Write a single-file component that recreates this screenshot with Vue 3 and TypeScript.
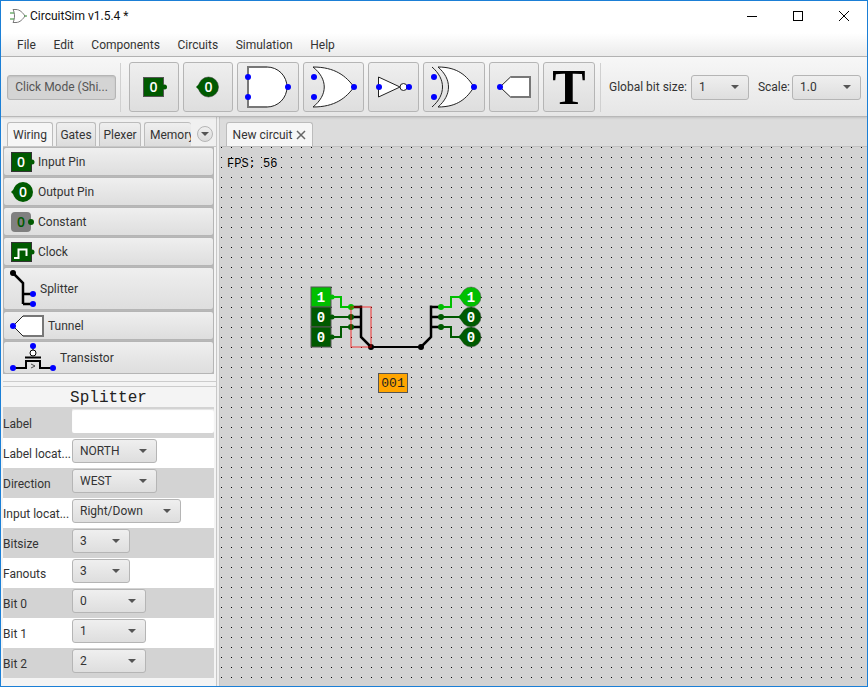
<script setup lang="ts">
const menus: string[] = ['File', 'Edit', 'Components', 'Circuits', 'Simulation', 'Help']
const tabs = [
  { name: 'Wiring', cls: 'tab-wiring' },
  { name: 'Gates', cls: 'tab-gates' },
  { name: 'Plexer', cls: 'tab-plexer' },
  { name: 'Memory', cls: 'tab-memory' },
]
const props = [
  { label: 'Label locat...', value: 'NORTH', w: 85 },
  { label: 'Direction', value: 'WEST', w: 85 },
  { label: 'Input locat...', value: 'Right/Down', w: 109 },
  { label: 'Bitsize', value: '3', w: 58 },
  { label: 'Fanouts', value: '3', w: 58 },
  { label: 'Bit 0', value: '0', w: 74 },
  { label: 'Bit 1', value: '1', w: 74 },
  { label: 'Bit 2', value: '2', w: 74 },
]
const inputs = [
  { y: 296, v: '1', fill: '#00bf00' },
  { y: 316, v: '0', fill: '#005a00' },
  { y: 336, v: '0', fill: '#005a00' },
]
const wires = [
  { d: 'M331 296H341V306H351', c: '#00bf00' },
  { d: 'M331 316H351', c: '#005a00' },
  { d: 'M331 336H341V326H351', c: '#005a00' },
  { d: 'M441 306H451V296H461', c: '#00bf00' },
  { d: 'M441 316H461', c: '#005a00' },
  { d: 'M441 326H451V336H461', c: '#005a00' },
]
</script>

<template>
  <div class="window">
    <header class="titlebar">
      <svg class="app-icon" width="18" height="16" viewBox="0 0 18 16">
        <path d="M4 1.500H7C11 1.500 14 5 16 8C14 11 11 14.500 7 14.500H4C6 11 6 5 4 1.500Z" fill="#fff" stroke="#777" />
        <path d="M1 5H5M1 11H5" stroke="#2a8a2a" />
        <path d="M15.500 8H18" stroke="#2a8a2a" />
      </svg>
      <span class="title-text">CircuitSim v1.5.4 *</span>
      <div class="win-controls">
        <svg width="12" height="12" viewBox="0 0 12 12"><path d="M1 6.500H11" stroke="#000" /></svg>
        <svg width="12" height="12" viewBox="0 0 12 12"><rect x="1.500" y="1.500" width="9" height="9" fill="none" stroke="#000" /></svg>
        <svg width="12" height="12" viewBox="0 0 12 12"><path d="M1 1L11 11M11 1L1 11" stroke="#000" /></svg>
      </div>
    </header>

    <nav class="menubar">
      <span v-for="m in menus" :key="m" class="menu-item">{{ m }}</span>
    </nav>

    <div class="toolbar">
      <button class="fx-btn click-mode">Click Mode (Shi...</button>
      <span class="tool-sep first-sep"></span>

      <button class="fx-btn tool w49">
        <svg width="50" height="50" viewBox="130 61 50 50">
          <rect x="144.500" y="76.500" width="20" height="19" fill="#005a00" stroke="#555" />
          <circle cx="165.500" cy="86" r="2.500" fill="#005a00" />
          <text x="154.500" y="91" class="pin-text small">0</text>
        </svg>
      </button>
      <button class="fx-btn tool w49">
        <svg width="50" height="50" viewBox="184 61 50 50">
          <circle cx="209.500" cy="86" r="10" fill="#005a00" stroke="#333" stroke-width=".5" />
          <path d="M197 86L203 80V92Z" fill="#005a00" />
          <text x="209.500" y="91" class="pin-text small">0</text>
        </svg>
      </button>
      <button class="fx-btn tool w61">
        <svg width="62" height="50" viewBox="238 61 62 50">
          <path d="M268 66H249V106H268" fill="#fff" stroke="#777" stroke-width="2" />
          <path d="M268 66A20 20 0 0 1 268 106" fill="#fff" stroke="#222" />
          <rect x="250" y="67" width="18" height="38" fill="#fff" />
          <circle cx="249" cy="76" r="3" fill="#0000ff" />
          <circle cx="249" cy="96" r="3" fill="#0000ff" />
          <circle cx="289" cy="86" r="3" fill="#0000ff" />
        </svg>
      </button>
      <button class="fx-btn tool w60">
        <svg width="61" height="50" viewBox="303 61 61 50">
          <path d="M313 66C335 66 346 75 354 86C346 97 335 106 313 106C328 94 328 78 313 66Z" fill="#fff" stroke="#222" />
          <circle cx="314" cy="76" r="3" fill="#0000ff" />
          <circle cx="314" cy="96" r="3" fill="#0000ff" />
          <circle cx="354" cy="86" r="3" fill="#0000ff" />
        </svg>
      </button>
      <button class="fx-btn tool w50">
        <svg width="51" height="50" viewBox="368 61 51 50">
          <path d="M378.500 76L400 86L378.500 96Z" fill="#fff" stroke="#222" />
          <circle cx="403.500" cy="86" r="3.500" fill="#fff" stroke="#222" />
          <circle cx="379" cy="86" r="3" fill="#0000ff" />
          <circle cx="409" cy="86" r="3" fill="#0000ff" />
        </svg>
      </button>
      <button class="fx-btn tool w61">
        <svg width="62" height="50" viewBox="423 61 62 50">
          <path d="M438 66C458 66 467 75 474 86C467 97 458 106 438 106C452 94 452 78 438 66Z" fill="#fff" stroke="#222" />
          <path d="M432 66C446 78 446 94 432 106" fill="none" stroke="#222" />
          <circle cx="434" cy="76" r="3" fill="#0000ff" />
          <circle cx="434" cy="96" r="3" fill="#0000ff" />
          <circle cx="474" cy="86" r="3" fill="#0000ff" />
        </svg>
      </button>
      <button class="fx-btn tool w49">
        <svg width="50" height="50" viewBox="489 61 50 50">
          <path d="M500 86L510.500 76H530V96H510.500Z" fill="#fff" />
          <path d="M510.500 76H530V96H510.500" fill="none" stroke="#777" stroke-width="2" />
          <path d="M500 86L510.500 76M500 86L510.500 96" fill="none" stroke="#222" />
          <circle cx="500" cy="86" r="3" fill="#0000ff" />
        </svg>
      </button>
      <button class="fx-btn tool w52 t-btn">T</button>
      <span class="tool-sep last-sep"></span>
      <span class="tool-label first-label">Global bit size:</span>
      <span class="fx-combo tool-combo w58"><span>1</span><i class="caret"></i></span>
      <span class="tool-label scale-label">Scale:</span>
      <span class="fx-combo tool-combo w68"><span>1.0</span><i class="caret"></i></span>
    </div>

    <main class="main">
      <aside class="left">
        <div class="tabstrip">
          <div v-for="(t, i) in tabs" :key="t.name" class="tab" :class="[t.cls, { active: i === 0 }]">{{ t.name }}</div>
          <span class="tab-menu"><i class="caret"></i></span>
        </div>

        <div class="palette">
          <button class="fx-btn pal h30">
            <svg class="pal-icon" width="28" height="22" viewBox="10 150 28 22">
              <rect x="11.500" y="151.500" width="20" height="19" fill="#005a00" stroke="#333" />
              <circle cx="32" cy="161" r="2.500" fill="#005a00" />
              <text x="21" y="166" class="pin-text small">0</text>
            </svg>
            Input Pin
          </button>
          <button class="fx-btn pal h30">
            <svg class="pal-icon" width="28" height="22" viewBox="10 180 28 22">
              <circle cx="23" cy="191" r="10" fill="#005a00" />
              <path d="M11 191L17 185V197Z" fill="#005a00" />
              <text x="23" y="196" class="pin-text small">0</text>
            </svg>
            Output Pin
          </button>
          <button class="fx-btn pal h30">
            <svg class="pal-icon" width="28" height="22" viewBox="10 210 28 22">
              <rect x="11" y="211" width="20" height="20" rx="4" fill="#808080" />
              <circle cx="31" cy="221" r="3" fill="#005a00" />
              <text x="21" y="226" class="pin-text small dark">0</text>
            </svg>
            Constant
          </button>
          <button class="fx-btn pal h30">
            <svg class="pal-icon" width="28" height="22" viewBox="10 240 28 22">
              <rect x="11.500" y="241.500" width="20" height="19" fill="#005a00" stroke="#333" />
              <circle cx="32" cy="251" r="2.500" fill="#005a00" />
              <path d="M14 257H18.500V248.500H26.500V255" fill="none" stroke="#fff" stroke-width="2" />
            </svg>
            Clock
          </button>
          <button class="fx-btn pal h44">
            <svg class="pal-icon" width="30" height="40" viewBox="10 268 30 40">
              <path d="M13 272L23 282V303M23 293H33M23 303H33" fill="none" stroke="#000" stroke-width="2.500" />
              <circle cx="13" cy="272" r="3" fill="#000" />
              <circle cx="33" cy="293" r="3" fill="#0000ff" />
              <circle cx="33" cy="303" r="3" fill="#0000ff" />
            </svg>
            Splitter
          </button>
          <button class="fx-btn pal h30">
            <svg class="pal-icon" width="38" height="24" viewBox="10 313 38 24">
              <path d="M13 325L23 315H43V335H23Z" fill="#fff" />
              <path d="M23 315H43V335H23" fill="none" stroke="#777" stroke-width="2" />
              <path d="M13 325L23 315M13 325L23 335" fill="none" stroke="#222" />
              <circle cx="13" cy="325" r="3" fill="#0000ff" />
            </svg>
            Tunnel
          </button>
          <button class="fx-btn pal h34">
            <svg class="pal-icon" width="50" height="30" viewBox="10 342 50 30">
              <path d="M33 345V349" stroke="#000" />
              <circle cx="33" cy="352" r="3" fill="#fff" stroke="#000" />
              <path d="M25 356.500H41" stroke="#000" stroke-width="2" />
              <path d="M13 367H26V360H40V367H53" fill="none" stroke="#000" stroke-width="2" />
              <path d="M31 363L35 365L31 367" fill="none" stroke="#222" stroke-width=".8" />
              <circle cx="33" cy="345" r="3" fill="#0000ff" />
              <circle cx="13" cy="367" r="3" fill="#0000ff" />
              <circle cx="53" cy="367" r="3" fill="#0000ff" />
            </svg>
            Transistor
          </button>
        </div>

        <div class="h-split"></div>

        <section class="props">
          <h2 class="props-title">Splitter</h2>
          <div class="row gray first-row">
            <span class="row-label">Label</span>
            <span class="text-input"></span>
          </div>
          <div v-for="(p, i) in props" :key="p.label" class="row" :class="i % 2 === 0 ? 'white' : 'gray'">
            <span class="row-label">{{ p.label }}</span>
            <span class="fx-combo prop-combo" :style="{ width: p.w + 'px' }"><span>{{ p.value }}</span><i class="caret"></i></span>
          </div>
        </section>
      </aside>

      <div class="v-split"></div>

      <section class="right">
        <div class="tabstrip right-strip">
          <div class="tab active circuit-tab">New circuit
            <svg class="tab-close" width="10" height="10" viewBox="0 0 10 10"><path d="M1 1L9 9M9 1L1 9" stroke="#666" stroke-width="1.500" /></svg>
          </div>
        </div>
        <div class="canvas">
          <svg class="board" viewBox="220 146 647 540" width="647" height="540">
            <defs>
              <pattern id="grid" x="221" y="146" width="10" height="10" patternUnits="userSpaceOnUse">
                <rect width="1" height="1" fill="#000" />
              </pattern>
            </defs>
            <rect x="220" y="146" width="647" height="540" fill="#d3d3d3" />
            <rect x="220" y="146" width="647" height="540" fill="url(#grid)" />

            <text x="227" y="166" class="fps">FPS: 56</text>

            <g v-for="p in inputs" :key="'in' + p.y">
              <rect x="311" :y="p.y - 10" width="20" height="20" :fill="p.fill" stroke="#555" stroke-width="1" />
              <circle cx="332" :cy="p.y" r="2.500" :fill="p.fill" />
              <text x="321" :y="p.y + 5" class="pin-text">{{ p.v }}</text>
            </g>

            <path v-for="w in wires" :key="w.d" :d="w.d" fill="none" :stroke="w.c" stroke-width="2" />

            <path d="M351 306H361M351 316H361M351 326H361M361 304.500V336L371 346M421 346L431 336V304.500M431 306H441M431 316H441M431 326H441" fill="none" stroke="#000" stroke-width="2.500" />
            <path d="M371 346H421" fill="none" stroke="#000" stroke-width="2" />
            <circle cx="371" cy="346" r="3" fill="#000" />
            <circle cx="421" cy="346" r="3" fill="#000" />

            <circle cx="351" cy="306" r="3" fill="#00bf00" />
            <circle cx="351" cy="316" r="3" fill="#005a00" />
            <circle cx="351" cy="326" r="3" fill="#005a00" />
            <circle cx="441" cy="306" r="3" fill="#00bf00" />
            <circle cx="441" cy="316" r="3" fill="#005a00" />
            <circle cx="441" cy="326" r="3" fill="#005a00" />

            <rect x="351" y="306" width="20" height="40" fill="none" stroke="#ff0000" stroke-opacity=".5" stroke-width="1.500" />

            <g v-for="p in inputs" :key="'out' + p.y">
              <circle cx="471" :cy="p.y" r="10" :fill="p.fill" stroke="#555" stroke-width=".5" />
              <path :d="`M458 ${p.y}L464 ${p.y - 6}V${p.y + 6}Z`" :fill="p.fill" />
              <text x="471" :y="p.y + 5" class="pin-text">{{ p.v }}</text>
            </g>

            <rect x="378.500" y="372.500" width="29" height="19" fill="#ffa500" stroke="#555" />
            <text x="393" y="386" class="value-text">001</text>
          </svg>
        </div>
      </section>
    </main>
  </div>
</template>

<style>
html, body { margin: 0; padding: 0; background: #fff; }
</style>

<style scoped>
.window {
  width: 868px;
  height: 687px;
  box-sizing: border-box;
  border: 1px solid #1b7fd6;
  display: flex;
  flex-direction: column;
  font-family: Roboto, "Open Sans", sans-serif;
  font-size: 12px;
  color: #333;
  overflow: hidden;
  background: #f4f4f4;
}
.titlebar {
  height: 32px;
  flex: none;
  background: #fff;
  display: flex;
  align-items: center;
  color: #111;
}
.app-icon { margin-left: 8px; margin-bottom: 2px; }
.title-text { margin-left: 3px; font-size: 12px; margin-bottom: 2px; }
.win-controls {
  margin-left: auto;
  display: flex;
  gap: 34px;
  margin-right: 17px;
  margin-bottom: 3px;
}
.menubar {
  height: 23px;
  flex: none;
  display: flex;
  align-items: center;
  padding-left: 16px;
  gap: 17.6px;
  background: linear-gradient(#fff, #ebebeb);
  border-bottom: 1px solid #b4b4b4;
}
.menu-item { line-height: 20px; }
.toolbar {
  height: 60px;
  flex: none;
  box-sizing: border-box;
  display: flex;
  align-items: center;
  padding: 1px 0 0 6px;
  background: linear-gradient(#f7f7f7, #e6e6e6);
  border-bottom: 1px solid #b8b8b8;
  box-shadow: 0 1px 2px rgba(0, 0, 0, .12);
  position: relative;
  z-index: 1;
}
.fx-btn {
  font: inherit;
  color: #333;
  box-sizing: border-box;
  border: 1px solid #b5b5b5;
  border-radius: 3px;
  background: linear-gradient(#efefef, #dedede);
  padding: 0;
}
.click-mode {
  width: 109px;
  height: 25px;
  background: #d4d4d4;
  color: #555;
  box-shadow: inset 0 1px 2px rgba(0, 0, 0, .1);
  white-space: nowrap;
  overflow: hidden;
}
.tool-sep {
  width: 1px;
  height: 49px;
  background: #d0d0d0;
  flex: none;
}
.first-sep { margin: 0 8px 0 4px; }
.last-sep { margin: 0 8px 0 1px; }
.tool {
  height: 50px;
  flex: none;
  margin-right: 4px;
  position: relative;
  overflow: hidden;
}
.tool svg { position: absolute; left: -1px; top: -1px; }
.w49 { width: 50px; }
.w60 { width: 61px; }
.w61 { width: 62px; }
.w50 { width: 51px; }
.w52 { width: 52px; }
.t-btn {
  font-family: "Liberation Serif", serif;
  font-weight: bold;
  font-size: 50px;
  line-height: 47px;
  color: #000;
  overflow: visible;
}
.tool-label { white-space: nowrap; }
.first-label { margin-right: 4px; }
.scale-label { margin: 0 2px 0 9px; }
.fx-combo {
  box-sizing: border-box;
  height: 25px;
  display: inline-flex;
  align-items: center;
  justify-content: space-between;
  border: 1px solid #b5b5b5;
  border-radius: 3px;
  background: linear-gradient(#efefef, #dedede);
  padding: 0 9px 0 7px;
  flex: none;
}
.w58 { width: 58px; }
.w68 { width: 69px; }
.caret {
  width: 0;
  height: 0;
  border-left: 4px solid transparent;
  border-right: 4px solid transparent;
  border-top: 4px solid #555;
  display: block;
}
.main {
  flex: 1;
  display: flex;
  min-height: 0;
}
.left {
  width: 215px;
  flex: none;
  display: flex;
  flex-direction: column;
  background: #f4f4f4;
  box-sizing: border-box;
  padding-left: 2px;
}
.tabstrip {
  height: 30px;
  flex: none;
  box-sizing: border-box;
  display: flex;
  align-items: flex-end;
  background: #f0f0f0;
  padding-left: 4px;
  gap: 3px;
  position: relative;
  border-bottom: 1px solid #c8c8c8;
}
.tab {
  height: 24px;
  box-sizing: border-box;
  display: flex;
  align-items: center;
  justify-content: center;
  border: 1px solid #bcbcbc;
  border-bottom: none;
  border-radius: 3px 3px 0 0;
  background: linear-gradient(#efefef, #dcdcdc);
  white-space: nowrap;
  overflow: hidden;
  flex: none;
}
.tab.active { background: #f6f6f6; }
.tab-wiring { width: 46px; }
.tab-gates { width: 40px; }
.tab-plexer { width: 42px; }
.tab-memory { width: 47px; justify-content: flex-start; padding-left: 5px; border-right: none; }
.tab-menu {
  position: absolute;
  right: 3px;
  top: 9px;
  width: 16px;
  height: 16px;
  box-sizing: border-box;
  border-radius: 50%;
  border: 1px solid #b5b5b5;
  background: linear-gradient(#efefef, #dcdcdc);
  display: flex;
  align-items: center;
  justify-content: center;
}
.palette {
  flex: none;
  display: flex;
  flex-direction: column;
  width: 211px;
  background: #b8b8b8;
}
.pal {
  display: flex;
  align-items: center;
  width: 100%;
  text-align: left;
  position: relative;
  font-size: 12px;
  margin-bottom: 1px;
  flex: none;
}
.pal:last-child { margin-bottom: 0; }
.h30 { height: 29px; }
.h44 { height: 43px; }
.h34 { height: 33px; }
.pal-icon { margin-left: 6px; flex: none; }
.h-split {
  height: 13px;
  flex: none;
  background: #f4f4f4;
  box-sizing: border-box;
  border-bottom: 1px solid #ccc;
  position: relative;
}
.h-split::after {
  content: "";
  position: absolute;
  left: 0;
  right: 0;
  bottom: 4px;
  height: 1px;
  background: #ccc;
}
.props {
  flex: 1;
  background: #f4f4f4;
  width: 211px;
  min-height: 0;
}
.props-title {
  margin: 0;
  height: 20px;
  font-family: "Liberation Mono", monospace;
  font-size: 16px;
  font-weight: normal;
  text-align: center;
  line-height: 22px;
  color: #222;
}
.row {
  height: 30px;
  display: flex;
  align-items: center;
  box-sizing: border-box;
}
.row.gray { background: #d3d3d3; }
.row.white { background: #fff; }
.row-label {
  width: 69px;
  flex: none;
  white-space: nowrap;
  overflow: hidden;
  padding-top: 2px;
}
.first-row { height: 31px; }
.text-input {
  flex: 1;
  height: 24px;
  background: #fff;
  border-radius: 2px;
  box-shadow: inset 0 1px 1px #e4e4e4;
  margin-top: -3px;
}
.prop-combo { align-self: flex-start; margin-top: 1px; height: 24px; }
.v-split {
  width: 4px;
  flex: none;
  background: #efefef;
  box-sizing: border-box;
  border-left: 1px solid #c8c8c8;
  border-right: 1px solid #c8c8c8;
}
.right {
  flex: 1;
  min-width: 0;
  display: flex;
  flex-direction: column;
  background: #dcdcdc;
}
.right-strip {
  background: #dcdcdc;
  padding-left: 6px;
  border-bottom: 1px solid #c0c0c0;
}
.circuit-tab { width: 87px; gap: 4px; }
.canvas { flex: 1; min-height: 0; overflow: hidden; }
.board { display: block; }
.fps {
  font-family: "Liberation Mono", monospace;
  font-size: 12px;
  fill: #000;
}
.pin-text {
  font-family: "Liberation Mono", monospace;
  font-size: 14px;
  font-weight: bold;
  fill: #fff;
  text-anchor: middle;
}
.pin-text.small {
  font-family: "Open Sans", sans-serif;
  font-size: 14px;
  font-weight: 600;
}
.pin-text.dark { fill: #005a00; }
.value-text {
  font-family: "Liberation Mono", monospace;
  font-size: 13px;
  fill: #222;
  text-anchor: middle;
}
</style>
